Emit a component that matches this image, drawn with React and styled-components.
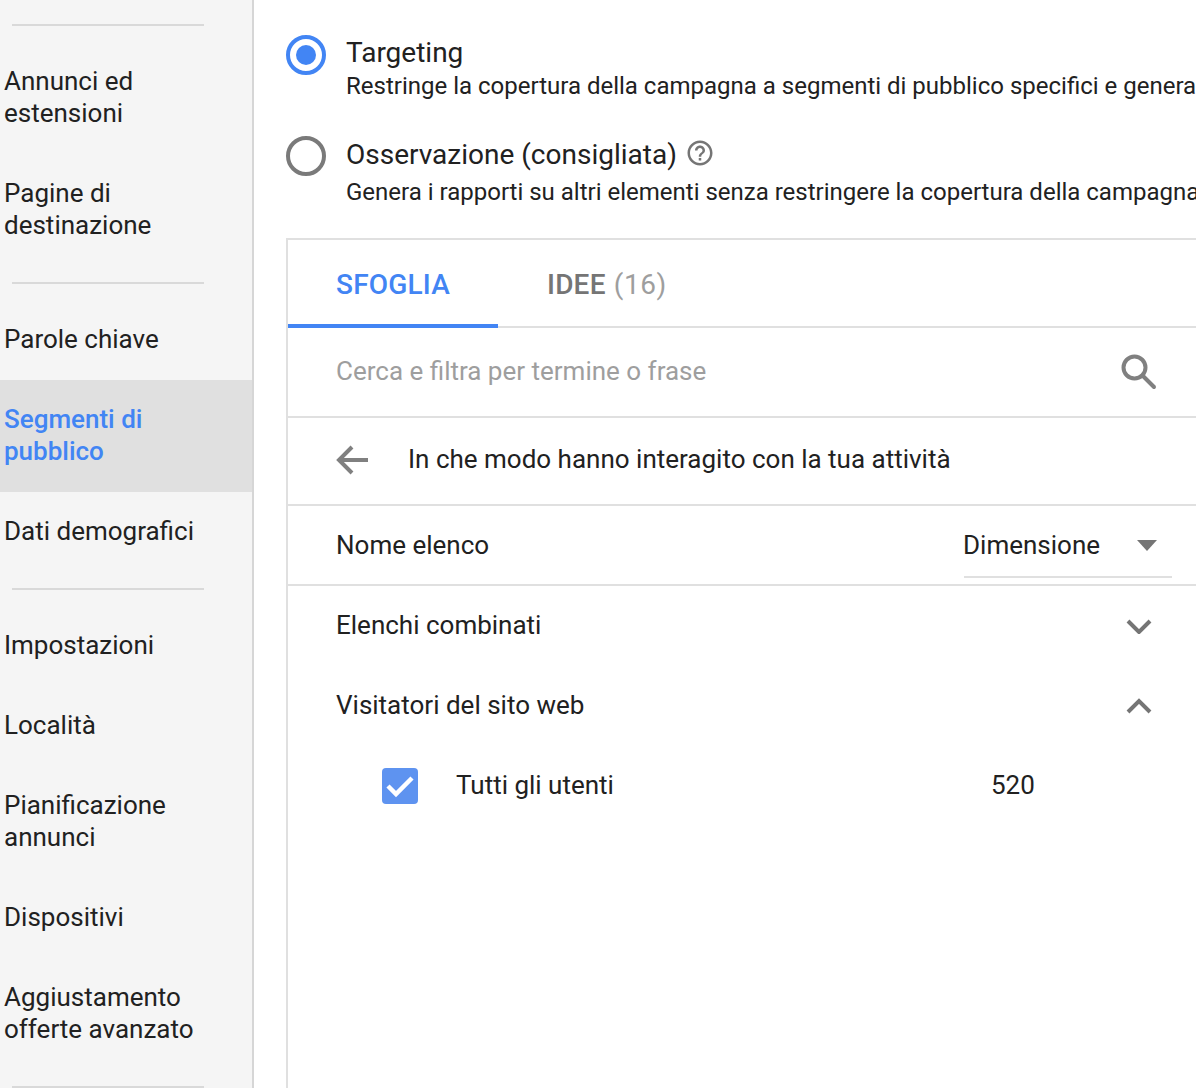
import React from "react";
import styled, { createGlobalStyle } from "styled-components";

const Global = createGlobalStyle`
  html, body { margin: 0; padding: 0; height: 1088px; overflow: hidden; background: #fff; }
  body { font-family: Roboto, "Liberation Sans", sans-serif; color: #212121; }
  #root { height: 1088px; overflow: hidden; }
`;

const Page = styled.div`display: flex; width: 1196px; height: 1088px; overflow: hidden;`;
const Sidebar = styled.nav`
  flex: 0 0 252px; height: 1088px; box-sizing: content-box; background: #f5f5f5;
  border-right: 2px solid #d6d6d6; padding-top: 24px; overflow: hidden;
`;
const Divider = styled.div`height: 2px; background: #d9d9d9; margin: 0 48px 15px 12px;`;
const NavItem = styled.div`
  display: flex; align-items: center; box-sizing: border-box; min-height: 80px;
  padding: ${p => (p.$active ? "23px 4px 25px" : "24px 4px")};
  margin: ${p => (p.$active ? "1px 0 -1px" : "0")};
  font-size: 26px; line-height: 32px; white-space: pre-line;
  color: ${p => (p.$active ? "#4285f4" : "#212121")};
  background: ${p => (p.$active ? "#e0e0e0" : "transparent")};
  font-weight: ${p => (p.$active ? 500 : 400)};
`;
const NavGap = styled.div`height: 17px;`;

const Main = styled.main`flex: 1; min-width: 0; padding: 35px 0 0 32px; overflow: hidden;`;
const RadioRow = styled.div`display: flex; gap: 20px; height: ${p => p.$h}px;`;
const Radio = styled.div`
  flex: 0 0 40px; width: 40px; height: 40px; box-sizing: border-box; border-radius: 50%;
  border: 4px solid ${p => (p.$on ? "#4285f4" : "#7a7a7a")};
  display: flex; align-items: center; justify-content: center;
  &::after { content: ""; display: ${p => (p.$on ? "block" : "none")}; width: 20px; height: 20px; border-radius: 50%; background: #4285f4; }
`;
const RadioText = styled.div`white-space: nowrap;`;
const RadioTitle = styled.div`display: flex; align-items: flex-start; gap: 8px; font-size: 28px; line-height: 36px; color: #212121; padding-top: ${p => p.$pt || 0}px;`;
const RadioSub = styled.div`font-size: 24px; line-height: 30px; color: #212121; margin-top: ${p => p.$mt || 0}px;`;
const HelpIcon = styled.svg`width: 30px; height: 30px; margin-top: 1px;`;

const Panel = styled.section`
  width: 1100px; margin-top: 4px; border-top: 2px solid #e0e0e0; border-left: 2px solid #e0e0e0; height: 900px;
`;
const Tabs = styled.div`display: flex; height: 86px; border-bottom: 2px solid #e0e0e0;`;
const Tab = styled.div`
  box-sizing: border-box; height: 88px; font-size: 28px; font-weight: 500; line-height: 90px;
  padding: 0 ${p => (p.$active ? 48 : 49)}px;
  letter-spacing: 0.2px; white-space: nowrap;
  color: ${p => (p.$active ? "#4285f4" : "#757575")};
  border-bottom: ${p => (p.$active ? "4px solid #4285f4" : "none")};
`;
const Count = styled.span`color: #9e9e9e; font-weight: 400; letter-spacing: 0.5px; margin-left: 1px;`;
const SearchRow = styled.div`
  display: flex; align-items: center; justify-content: space-between; height: 86px;
  border-bottom: 2px solid #e0e0e0; padding: 0 230px 2px 48px; font-size: 26px; color: #9e9e9e;
`;
const SearchIcon = styled.svg`display: block; flex: none; margin-top: -1px;`;
const BackRow = styled.div`
  display: flex; align-items: center; gap: 39px; height: 86px; border-bottom: 2px solid #e0e0e0; padding-left: 47px; font-size: 26px;
`;
const BackIcon = styled.svg`display: block; flex: none; margin-top: -3px;`;
const BackText = styled.div`margin-top: -4px;`;
const HeadRow = styled.div`
  display: flex; align-items: center; height: 78px; border-bottom: 2px solid #e0e0e0; padding-left: 48px; font-size: 26px;
`;
const HeadLabel = styled.div`width: 628px;`;
const SelectBox = styled.div`
  width: 208px; height: 64px; box-sizing: border-box; display: flex; align-items: center; justify-content: space-between;
  border-bottom: 2px solid #e0e0e0; padding: 0 15px 0 0; margin-top: 2px;
`;
const SelectValue = styled.span`margin-left: -1px;`;
const Caret = styled.div`width: 0; height: 0; border-left: 10px solid transparent; border-right: 10px solid transparent; border-top: 11px solid #757575;`;
const Row = styled.div`display: flex; align-items: center; box-sizing: border-box; height: 80px; padding: 0 0 2px 48px; font-size: 26px;`;
const RowLabel = styled.div`width: 790px;`;
const Chevron = styled.svg`display: block; flex: none; margin-top: 2px;`;
const ChildRow = styled(Row)`padding-left: 94px;`;
const Check = styled.div`
  width: 36px; height: 36px; border-radius: 4px; background: #5e93f0; display: flex; align-items: center; justify-content: center; margin: 2px 38px 0 0;
`;
const ChildLabel = styled.div`width: 535px;`;
const Icon = styled.svg`display: block; flex: none;`;

const Nav = ({ children, active }) => <NavItem $active={active}>{children}</NavItem>;

export default function App() {
  return (
    <Page>
      <Global />
      <Sidebar>
        <Divider />
        <Nav>{"Annunci ed\nestensioni"}</Nav>
        <Nav>{"Pagine di\ndestinazione"}</Nav>
        <NavGap />
        <Divider />
        <Nav>Parole chiave</Nav>
        <Nav active>{"Segmenti di\npubblico"}</Nav>
        <Nav>Dati demografici</Nav>
        <NavGap />
        <Divider />
        <Nav>Impostazioni</Nav>
        <Nav>Località</Nav>
        <Nav>{"Pianificazione\nannunci"}</Nav>
        <Nav>Dispositivi</Nav>
        <Nav>{"Aggiustamento\nofferte avanzato"}</Nav>
        <NavGap />
        <Divider />
      </Sidebar>
      <Main>
        <RadioRow $h={101}>
          <Radio $on />
          <RadioText>
            <RadioTitle>Targeting</RadioTitle>
            <RadioSub>Restringe la copertura della campagna a segmenti di pubblico specifici e genera i rapporti</RadioSub>
          </RadioText>
        </RadioRow>
        <RadioRow $h={98}>
          <Radio />
          <RadioText>
            <RadioTitle $pt={1}>
              Osservazione (consigliata)
              <HelpIcon viewBox="0 0 24 24" fill="#757575">
                <path d="M11 18h2v-2h-2v2zm1-16C6.48 2 2 6.48 2 12s4.48 10 10 10 10-4.48 10-10S17.52 2 12 2zm0 18c-4.41 0-8-3.59-8-8s3.59-8 8-8 8 3.59 8 8-3.59 8-8 8zm0-14c-2.21 0-4 1.79-4 4h2c0-1.1.9-2 2-2s2 .9 2 2c0 2-3 1.75-3 5h2c0-2.25 3-2.5 3-5 0-2.21-1.79-4-4-4z" />
              </HelpIcon>
            </RadioTitle>
            <RadioSub $mt={4}>Genera i rapporti su altri elementi senza restringere la copertura della campagna</RadioSub>
          </RadioText>
        </RadioRow>
        <Panel>
          <Tabs>
            <Tab $active>SFOGLIA</Tab>
            <Tab>IDEE <Count>(16)</Count></Tab>
          </Tabs>
          <SearchRow>
            Cerca e filtra per termine o frase
            <SearchIcon width="40" height="40" viewBox="0 0 40 40" fill="none" stroke="#808080" strokeWidth="4">
              <circle cx="16.5" cy="16.5" r="11" />
              <path d="M24.5 24.5L36 36" strokeLinecap="round" />
            </SearchIcon>
          </SearchRow>
          <BackRow>
            <BackIcon width="34" height="32" viewBox="0 0 34 32" fill="none" stroke="#808080" strokeWidth="4">
              <path d="M33 16H4M17 3L4 16l13 13" />
            </BackIcon>
            <BackText>In che modo hanno interagito con la tua attività</BackText>
          </BackRow>
          <HeadRow>
            <HeadLabel>Nome elenco</HeadLabel>
            <SelectBox><SelectValue>Dimensione</SelectValue><Caret /></SelectBox>
          </HeadRow>
          <Row>
            <RowLabel>Elenchi combinati</RowLabel>
            <Chevron width="26" height="16" viewBox="0 0 26 16" fill="none" stroke="#757575" strokeWidth="4"><path d="M2 3l11 11L24 3" /></Chevron>
          </Row>
          <Row>
            <RowLabel>Visitatori del sito web</RowLabel>
            <Chevron width="26" height="16" viewBox="0 0 26 16" fill="none" stroke="#757575" strokeWidth="4"><path d="M2 14L13 3l11 11" /></Chevron>
          </Row>
          <ChildRow>
            <Check>
              <Icon width="30" height="24" viewBox="0 0 30 24" fill="none" stroke="#fff" strokeWidth="4.5"><path d="M3 12l8 8L27 4" /></Icon>
            </Check>
            <ChildLabel>Tutti gli utenti</ChildLabel>
            520
          </ChildRow>
        </Panel>
      </Main>
    </Page>
  );
}
